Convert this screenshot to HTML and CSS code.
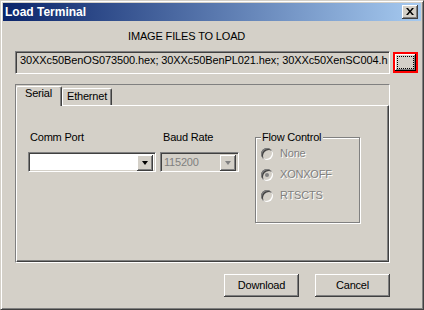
FILE: index.html
```html
<!DOCTYPE html>
<html>
<head>
<meta charset="utf-8">
<link rel="stylesheet" href="styles.css">
</head>
<body>
<div class="window">
  <div class="titlebar">
    <span class="title">Load Terminal</span>
    <div class="close">
      <svg width="8" height="7" viewBox="0 0 8 7"><path d="M0 0h2l2 2.4L6 0h2L5 3.5 8 7H6L4 4.6 2 7H0l3-3.5z" fill="#000"/></svg>
    </div>
  </div>
  <div class="content">
    <div class="files-label">IMAGE FILES TO LOAD</div>
    <div class="files-row">
      <div class="field">30XXc50BenOS073500.hex; 30XXc50BenPL021.hex; 30XXc50XenSC004.h</div>
      <div class="browse-focus"><div class="browse"><div class="focus-rect"></div></div></div>
    </div>
    <div class="tab-frame">
      <div class="tabs">
        <div class="tab active">Serial</div>
        <div class="tab">Ethernet</div>
      </div>
      <div class="panel">
        <div class="col comm">
          <div class="lbl">Comm Port</div>
          <div class="combo">
            <div class="combo-text"></div>
            <div class="drop"><span class="arrow"></span></div>
          </div>
        </div>
        <div class="col baud">
          <div class="lbl">Baud Rate</div>
          <div class="combo disabled">
            <div class="combo-text">115200</div>
            <div class="drop"><span class="arrow"></span></div>
          </div>
        </div>
        <div class="group">
          <div class="legend">Flow Control</div>
          <div class="radio-row"><span class="radio"></span><span class="rtext">None</span></div>
          <div class="radio-row"><span class="radio checked"></span><span class="rtext">XONXOFF</span></div>
          <div class="radio-row"><span class="radio"></span><span class="rtext">RTSCTS</span></div>
        </div>
      </div>
    </div>
    <div class="actions">
      <div class="btn">Download</div>
      <div class="btn">Cancel</div>
    </div>
  </div>
</div>
</body>
</html>
```

FILE: styles.css
```css
html, body {
  margin: 0;
  padding: 0;
  background: #D4D0C8;
}
body {
  font-family: "Liberation Sans", Arial, sans-serif;
  font-size: 11px;
  line-height: 13px;
  color: #000;
  letter-spacing: -0.2px;
}
.window {
  width: 424px;
  height: 310px;
  box-sizing: border-box;
  border: 1px solid;
  border-color: #D4D0C8 #404040 #404040 #D4D0C8;
  box-shadow: inset 1px 1px 0 #fff, inset -1px -1px 0 #808080;
  padding: 2px;
  background: #D4D0C8;
}
.titlebar {
  height: 18px;
  display: flex;
  align-items: center;
  justify-content: space-between;
  background: linear-gradient(to right, #0A246A, #A6CAF0);
  padding: 0 3px 0 2px;
}
.title {
  font-weight: bold;
  font-size: 12px;
  line-height: 18px;
  color: #fff;
  letter-spacing: 0;
}
.close {
  width: 16px;
  height: 14px;
  box-sizing: border-box;
  background: #D4D0C8;
  box-shadow: inset -1px -1px 0 #404040, inset 1px 1px 0 #fff, inset -2px -2px 0 #808080;
  display: flex;
  align-items: center;
  justify-content: center;
  padding: 0 1px 1px 0;
}
.close svg { display: block; }
.content {
  padding: 0 3px 0 12px;
}
.files-label {
  margin: 9px 0 0 113px;
  height: 13px;
  letter-spacing: -0.15px;
}
.files-row {
  display: flex;
  align-items: flex-start;
  margin-top: 8px;
}
.field {
  width: 375px;
  height: 23px;
  box-sizing: border-box;
  border: 1px solid;
  border-color: #808080 #fff #fff #808080;
  box-shadow: inset 1px 1px 0 #404040, inset -1px -1px 0 #D4D0C8;
  padding: 2px 0 0 4px;
  white-space: nowrap;
  overflow: hidden;
  letter-spacing: -0.1px;
}
.browse-focus {
  width: 25px;
  height: 21px;
  box-sizing: border-box;
  border: 2px solid #FF0000;
  margin: 1px 0 0 3px;
}
.browse {
  width: 100%;
  height: 100%;
  box-sizing: border-box;
  background: #D4D0C8;
  box-shadow: inset -1px -1px 0 #000, inset 1px 1px 0 #fff, inset -2px -2px 0 #808080;
  padding: 2px 2px 2px 2px;
}
.focus-rect {
  width: 100%;
  height: 100%;
  box-sizing: border-box;
  border: 1px dotted #000;
}
.tab-frame {
  width: 375px;
  height: 179px;
  box-sizing: border-box;
  margin-top: 10px;
  border: 1px solid;
  border-color: #808080 #fff #fff #808080;
  display: flex;
  flex-direction: column;
}
.tabs {
  height: 20px;
  display: flex;
  align-items: flex-end;
  flex: none;
}
.tab {
  height: 17px;
  box-sizing: border-box;
  border-left: 1px solid #fff;
  border-top: 1px solid #fff;
  border-right: 1px solid #404040;
  box-shadow: inset -1px 0 0 #808080;
  border-radius: 2px 2px 0 0;
  padding: 1px 0 0 4px;
  width: 50px;
  background: #D4D0C8;
}
.tab.active {
  width: 46px;
  height: 20px;
  margin-bottom: -1px;
  position: relative;
  z-index: 1;
  padding: 0 0 0 8px;
}
.panel {
  flex: 1;
  box-sizing: border-box;
  border-top: 1px solid #fff;
  border-left: 1px solid #fff;
  border-right: 1px solid #404040;
  border-bottom: 1px solid #404040;
  box-shadow: inset -1px -1px 0 #808080;
  display: flex;
  align-items: flex-start;
  padding: 25px 0 0 11px;
}
.col .lbl {
  height: 13px;
  margin: 0 0 8px 2px;
}
.comm { width: 128px; margin-right: 4px; }
.baud { width: 79px; margin-right: 16px; }
.baud .lbl { margin-left: 3px; }
.combo {
  height: 20px;
  box-sizing: border-box;
  border: 1px solid;
  border-color: #808080 #fff #fff #808080;
  box-shadow: inset 1px 1px 0 #404040, inset -1px -1px 0 #D4D0C8;
  background: #fff;
  display: flex;
  padding: 2px;
}
.combo.disabled { background: #D4D0C8; }
.combo-text {
  flex: 1;
  padding: 1px 0 0 1px;
  color: #808080;
}
.drop {
  width: 16px;
  height: 16px;
  box-sizing: border-box;
  background: #D4D0C8;
  box-shadow: inset -1px -1px 0 #404040, inset 1px 1px 0 #fff, inset -2px -2px 0 #808080;
  display: flex;
  align-items: center;
  justify-content: center;
  padding: 0 1px 1px 0;
}
.arrow {
  width: 0;
  height: 0;
  border-left: 3.5px solid transparent;
  border-right: 3.5px solid transparent;
  border-top: 4px solid #000;
}
.disabled .arrow {
  border-top-color: #808080;
}
.group {
  position: relative;
  width: 105px;
  height: 86px;
  box-sizing: border-box;
  margin-top: 6px;
  border: 1px solid #808080;
  box-shadow: inset 1px 1px 0 #fff, 1px 1px 0 #fff;
  padding: 9px 0 0 5px;
}
.legend {
  position: absolute;
  left: 5px;
  top: -7px;
  padding: 0 2px 0 1px;
  background: #D4D0C8;
  line-height: 13px;
}
.radio-row {
  display: flex;
  align-items: center;
  height: 13px;
  margin-bottom: 8px;
}
.radio {
  width: 12px;
  height: 12px;
  border-radius: 50%;
  box-sizing: border-box;
  background: #D4D0C8;
  box-shadow: inset 1px 1px 0 #808080, inset -1px -1px 0 #fff, inset 2px 2px 0 #404040;
  display: flex;
  align-items: center;
  justify-content: center;
  flex: none;
}
.radio.checked::after {
  content: "";
  width: 4px;
  height: 4px;
  border-radius: 50%;
  background: #808080;
}
.rtext {
  margin-left: 7px;
  color: #808080;
  text-shadow: 1px 1px 0 #fff;
}
.actions {
  display: flex;
  justify-content: flex-end;
  gap: 16px;
  margin-top: 11px;
  padding-right: 28px;
}
.btn {
  width: 75px;
  height: 23px;
  box-sizing: border-box;
  background: #D4D0C8;
  box-shadow: inset -1px -1px 0 #404040, inset 1px 1px 0 #fff, inset -2px -2px 0 #808080;
  display: flex;
  align-items: center;
  justify-content: center;
  padding-bottom: 1px;
}
```
